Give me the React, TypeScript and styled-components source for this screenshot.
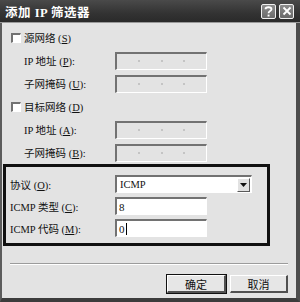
import React from 'react'
import styled, { createGlobalStyle, css } from 'styled-components'

const GlobalStyle = createGlobalStyle`
  html, body {
    margin: 0;
    padding: 0;
    background: #e3e3e3;
  }
  body {
    font-family: "Liberation Serif", "Noto Sans CJK SC", serif;
    font-size: 10.5px;
    color: #111111;
  }
`

const sunken = css`
  box-sizing: border-box;
  border-top: 2px solid #727272;
  border-left: 2px solid #727272;
  border-bottom: 1px solid #ffffff;
  border-right: 1px solid #ffffff;
`

const raised = css`
  box-sizing: border-box;
  border-top: 1px solid #ffffff;
  border-left: 1px solid #ffffff;
  border-bottom: 1px solid #5a5a5a;
  border-right: 1px solid #5a5a5a;
  background: #e2e2e2;
`

const Window = styled.div`
  width: 300px;
  height: 302px;
  display: flex;
  flex-direction: column;
  overflow: hidden;
`

const TitleBar = styled.div`
  height: 23px;
  flex: none;
  display: flex;
  align-items: center;
  padding: 0 6px 0 5px;
  background: linear-gradient(#4a4a4a, #333333 60%, #2a2a2a);
  border-bottom: 1px solid #9a9a9a;
  box-sizing: border-box;
`

const Title = styled.div`
  flex: 1;
  color: #ffffff;
  font-weight: bold;
  font-size: 12.5px;
  letter-spacing: 0.5px;
  white-space: pre;
`

const TitleButtons = styled.div`
  display: flex;
  gap: 3px;
`

const TitleButton = styled.div`
  width: 15px;
  height: 15px;
  box-sizing: border-box;
  border: 1px solid #f0f0f0;
  border-radius: 2px;
  background: linear-gradient(#8c8c8c, #6a6a6a);
  display: flex;
  align-items: center;
  justify-content: center;
`

const Body = styled.div`
  flex: 1;
  display: flex;
  flex-direction: column;
  background: #e3e3e3;
  border-left: 2px solid #5c5c5c;
  border-right: 4px solid #4c4c4c;
  border-bottom: 4px solid #3c3c3c;
  padding-top: 3px;
`

const CheckRow = styled.div`
  height: 23px;
  display: flex;
  align-items: center;
  padding-left: 9px;
`

const CheckBox = styled.span`
  ${sunken};
  width: 10px;
  height: 10px;
  background: #ffffff;
  margin-right: 3px;
`

const FieldRow = styled.div<{ $indent: number; $labelWidth: number; $height: number }>`
  height: ${(p) => p.$height}px;
  display: flex;
  align-items: center;
  padding-left: ${(p) => p.$indent}px;

  & > label {
    width: ${(p) => p.$labelWidth}px;
    flex: none;
    white-space: pre;
  }
`

const IpField = styled.div`
  ${sunken};
  width: 92px;
  height: 18px;
  background: #e3e3e3;
  display: flex;
  align-items: center;
  justify-content: space-evenly;
`

const Dot = styled.span`
  width: 2px;
  height: 2px;
  background: #c4c4c4;
`

const TextField = styled.div`
  ${sunken};
  width: 92px;
  height: 18px;
  background: #ffffff;
  display: flex;
  align-items: center;
  padding-left: 2px;
  font-family: "Liberation Serif", serif;
  font-size: 11px;
`

const Caret = styled.span`
  width: 1px;
  height: 12px;
  background: #000;
  margin-left: 1px;
`

const Select = styled.div`
  ${sunken};
  width: 137px;
  height: 18px;
  background: #ffffff;
  display: flex;
  align-items: center;
  padding-left: 3px;
  font-size: 10.5px;

  & > span {
    flex: 1;
  }
`

const DropButton = styled.div`
  ${raised};
  width: 13px;
  height: 14px;
  display: flex;
  align-items: center;
  justify-content: center;
  margin-right: 1px;
`

const Group = styled.div`
  margin-left: 1px;
  width: 267px;
  height: 82px;
  box-sizing: border-box;
  border: 3px solid #111111;
  padding-top: 6px;
`

const Separator = styled.div`
  margin: 17px 8px 0 8px;
  height: 0;
  border-top: 1px solid #9c9c9c;
  border-bottom: 1px solid #ffffff;
`

const ButtonRow = styled.div`
  display: flex;
  justify-content: flex-end;
  gap: 4px;
  padding-right: 8px;
  margin-top: 10px;
`

const DialogButton = styled.button<{ $default?: boolean; $width: number }>`
  width: ${(p) => p.$width}px;
  height: 18px;
  box-sizing: border-box;
  padding: 0;
  font-family: "Noto Sans CJK SC", sans-serif;
  font-size: 11px;
  color: #111111;
  background: #e6e6e6;
  border-top: 1px solid #ffffff;
  border-left: 1px solid #ffffff;
  border-bottom: 2px solid #505050;
  border-right: 2px solid #505050;
  ${(p) =>
    p.$default &&
    css`
      outline: 1px solid #111;
    `}
`

const IpInput = () => (
  <IpField>
    <Dot />
    <Dot />
    <Dot />
  </IpField>
)

const Key = ({ k }: { k: string }) => (
  <>
    {' '}(<u>{k}</u>):
  </>
)

export default function App() {
  return (
    <>
      <GlobalStyle />
      <Window>
        <TitleBar>
          <Title>添加 IP 筛选器</Title>
          <TitleButtons>
            <TitleButton>
              <svg width="9" height="11" viewBox="0 0 9 11">
                <path d="M1.5 3.2 C1.5 0.6 7.5 0.6 7.5 3.2 C7.5 5 4.5 5 4.5 7.2" fill="none" stroke="#fff" strokeWidth="1.8" />
                <rect x="3.6" y="8.6" width="1.9" height="1.9" fill="#fff" />
              </svg>
            </TitleButton>
            <TitleButton>
              <svg width="10" height="10" viewBox="0 0 10 10">
                <path d="M1.5 1.5 L8.5 8.5 M8.5 1.5 L1.5 8.5" stroke="#fff" strokeWidth="1.8" />
              </svg>
            </TitleButton>
          </TitleButtons>
        </TitleBar>
        <Body>
          <CheckRow>
            <CheckBox />
            <span>
              源网络 (<u>S</u>)
            </span>
          </CheckRow>
          <FieldRow $indent={22} $labelWidth={91} $height={23}>
            <label>
              IP 地址<Key k="P" />
            </label>
            <IpInput />
          </FieldRow>
          <FieldRow $indent={22} $labelWidth={91} $height={23}>
            <label>
              子网掩码<Key k="U" />
            </label>
            <IpInput />
          </FieldRow>
          <CheckRow>
            <CheckBox />
            <span>
              目标网络 (<u>D</u>)
            </span>
          </CheckRow>
          <FieldRow $indent={22} $labelWidth={91} $height={23}>
            <label>
              IP 地址<Key k="A" />
            </label>
            <IpInput />
          </FieldRow>
          <FieldRow $indent={22} $labelWidth={91} $height={23}>
            <label>
              子网掩码<Key k="B" />
            </label>
            <IpInput />
          </FieldRow>
          <Group>
            <FieldRow $indent={4} $labelWidth={105} $height={22}>
              <label>
                协议<Key k="O" />
              </label>
              <Select>
                <span>ICMP</span>
                <DropButton>
                  <svg width="7" height="4" viewBox="0 0 7 4">
                    <path d="M0 0 H7 L3.5 4 Z" fill="#111" />
                  </svg>
                </DropButton>
              </Select>
            </FieldRow>
            <FieldRow $indent={4} $labelWidth={105} $height={22}>
              <label>
                ICMP 类型<Key k="C" />
              </label>
              <TextField>8</TextField>
            </FieldRow>
            <FieldRow $indent={4} $labelWidth={105} $height={22}>
              <label>
                ICMP 代码<Key k="M" />
              </label>
              <TextField>
                0<Caret />
              </TextField>
            </FieldRow>
          </Group>
          <Separator />
          <ButtonRow>
            <DialogButton $default $width={59}>
              确定
            </DialogButton>
            <DialogButton $width={58}>取消</DialogButton>
          </ButtonRow>
        </Body>
      </Window>
    </>
  )
}
